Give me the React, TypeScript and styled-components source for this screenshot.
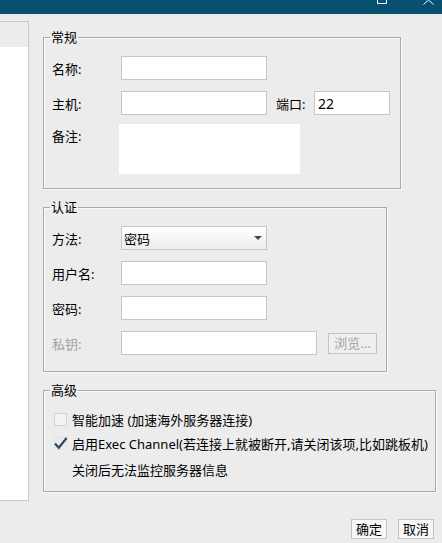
import React, { FC, ReactNode } from 'react';
import styled, { createGlobalStyle } from 'styled-components';

const GlobalStyle = createGlobalStyle`
  html, body {
    margin: 0;
    padding: 0;
    background: #ececec;
  }
  body {
    font-family: "Noto Sans", "Noto Sans CJK SC", sans-serif;
    font-size: 13px;
    color: #000;
  }
`;

const Window = styled.div`
  width: 442px;
  height: 543px;
  overflow: hidden;
  display: flex;
  flex-direction: column;
  background: #ececec;
`;

const TitleBar = styled.div`
  height: 14px;
  flex: none;
  background: #075070;
  display: flex;
  justify-content: flex-end;
  align-items: flex-start;
  gap: 36px;
  padding-right: 8px;
`;

const Body = styled.div`
  display: flex;
  flex: none;
  height: 487px;
`;

const SidePanel = styled.div`
  margin-top: 7px;
  width: 28px;
  height: 478px;
  border-top: 1px solid #c8c8c8;
  border-right: 1px solid #c8c8c8;
  border-bottom: 1px solid #c8c8c8;
  display: flex;
  flex-direction: column;
`;

const SideHeader = styled.div`
  height: 25px;
  background: #ececec;
`;

const SideList = styled.div`
  flex: 1;
  background: #fff;
`;

const Form = styled.div`
  padding: 16px 0 0 14px;
  display: flex;
  flex-direction: column;
  gap: 11px;
`;

const GroupBox = styled.fieldset<{ $w: number; $pb: number }>`
  width: ${p => p.$w}px;
  box-sizing: border-box;
  margin: 0;
  padding: 12px 8px ${p => p.$pb}px 8px;
  border: 1px solid #a9a9a9;
  box-shadow: inset 1px 1px 0 #fafafa, 1px 1px 0 #fafafa;
  min-width: 0;
`;

const Legend = styled.legend`
  padding: 0 1px;
  margin-left: -2px;
  line-height: 14px;
`;

const Rows = styled.div<{ $gap: number }>`
  display: flex;
  flex-direction: column;
  gap: ${p => p.$gap}px;
`;

const Row = styled.div`
  display: flex;
  align-items: center;
  height: 24px;
`;

const TopRow = styled.div`
  display: flex;
  align-items: flex-start;
  margin-top: 9px;
`;

const Label = styled.span<{ $w?: number; $disabled?: boolean }>`
  width: ${p => p.$w ?? 69}px;
  flex: none;
  white-space: nowrap;
  color: ${p => (p.$disabled ? '#a3a3a3' : '#000')};
`;

const Input = styled.div<{ $w?: number }>`
  width: ${p => p.$w ?? 146}px;
  height: 24px;
  box-sizing: border-box;
  flex: none;
  background: #fff;
  border: 1px solid #c6c6c6;
  padding-left: 3px;
  display: flex;
  align-items: center;
  font-size: 14px;
`;

const Memo = styled.div`
  width: 181px;
  height: 50px;
  margin-left: -2px;
  background: #fff;
`;

const MemoLabel = styled(Label)`
  padding-top: 2px;
`;

const Combo = styled.div`
  width: 146px;
  height: 24px;
  box-sizing: border-box;
  border: 1px solid #c6c6c6;
  background: linear-gradient(#ffffff, #ececec);
  display: flex;
  align-items: center;
  justify-content: space-between;
  padding: 0 4px 0 2px;
`;

const Arrow = styled.span`
  width: 0;
  height: 0;
  border-left: 4px solid transparent;
  border-right: 4px solid transparent;
  border-top: 4px solid #4a4a4a;
`;

const Spacer = styled.span<{ $w: number }>`
  width: ${p => p.$w}px;
  flex: none;
`;

const Button = styled.button<{ $disabled?: boolean; $w: number; $h: number }>`
  width: ${p => p.$w}px;
  height: ${p => p.$h}px;
  box-sizing: border-box;
  padding: 0;
  font-family: inherit;
  font-size: 13px;
  line-height: 1;
  border: 1px solid #c4c4c4;
  background: ${p => (p.$disabled ? '#efefef' : '#f7f7f7')};
  color: ${p => (p.$disabled ? '#a3a3a3' : '#000')};
`;

const CheckRow = styled.div<{ $mt?: number }>`
  display: flex;
  align-items: center;
  height: 24px;
  margin-top: ${p => p.$mt ?? 0}px;
  white-space: nowrap;
`;

const Box = styled.span<{ $checked?: boolean }>`
  width: 13px;
  height: 13px;
  box-sizing: border-box;
  margin: 0 5px 0 2px;
  flex: none;
  display: flex;
  align-items: center;
  justify-content: center;
  border: 1px solid ${p => (p.$checked ? '#e2e2e2' : '#d2d2d2')};
  background: ${p => (p.$checked ? 'transparent' : '#f3f3f3')};
`;

const Note = styled.span`
  padding-left: 20px;
`;

const Footer = styled.div`
  display: flex;
  justify-content: flex-end;
  gap: 11px;
  padding: 18px 8px 0 0;
`;

const Group: FC<{ title: string; w: number; pb: number; children: ReactNode }> = ({
  title,
  w,
  pb,
  children,
}) => (
  <GroupBox $w={w} $pb={pb}>
    <Legend>{title}</Legend>
    {children}
  </GroupBox>
);

const CheckBox: FC<{ checked?: boolean }> = ({ checked }) => (
  <Box $checked={checked}>
    {checked && (
      <svg width="14" height="13" viewBox="0 0 14 13" style={{ overflow: 'visible' }}>
        <path d="M1 6.5 L4.8 10.8 L12.6 1" fill="none" stroke="#34475b" strokeWidth="2.2" />
      </svg>
    )}
  </Box>
);

export default function App() {
  return (
    <>
      <GlobalStyle />
      <Window>
        <TitleBar>
          <svg width="10" height="4" viewBox="0 0 10 4">
            <path d="M0.5 0 V3.5 H9.5 V0" fill="none" stroke="#fff" strokeWidth="1" />
          </svg>
          <svg width="11" height="5" viewBox="0 0 11 5">
            <path d="M0.5 4.5 L5.5 0 L10.5 4.5" fill="none" stroke="#fff" strokeWidth="1" />
          </svg>
        </TitleBar>
        <Body>
          <SidePanel>
            <SideHeader />
            <SideList />
          </SidePanel>
          <Form>
            <Group title="常规" w={358} pb={14}>
              <Rows $gap={11}>
                <Row>
                  <Label>名称:</Label>
                  <Input />
                </Row>
                <Row>
                  <Label>主机:</Label>
                  <Input />
                  <Spacer $w={9} />
                  <Label $w={38}>端口:</Label>
                  <Input $w={76}>22</Input>
                </Row>
              </Rows>
              <TopRow>
                <MemoLabel>备注:</MemoLabel>
                <Memo />
              </TopRow>
            </Group>
            <Group title="认证" w={344} pb={16}>
              <Rows $gap={11}>
                <Row>
                  <Label>方法:</Label>
                  <Combo>
                    <span>密码</span>
                    <Arrow />
                  </Combo>
                </Row>
                <Row>
                  <Label>用户名:</Label>
                  <Input />
                </Row>
                <Row>
                  <Label>密码:</Label>
                  <Input />
                </Row>
                <Row>
                  <Label $disabled>私钥:</Label>
                  <Input $w={196} />
                  <Spacer $w={11} />
                  <Button $disabled $w={49} $h={21}>
                    浏览...
                  </Button>
                </Row>
              </Rows>
            </Group>
            <Group title="高级" w={393} pb={10}>
              <CheckRow $mt={-2}>
                <CheckBox />
                智能加速 (加速海外服务器连接)
              </CheckRow>
              <CheckRow>
                <CheckBox checked />
                启用Exec Channel(若连接上就被断开,请关闭该项,比如跳板机)
              </CheckRow>
              <CheckRow $mt={2}>
                <Note>关闭后无法监控服务器信息</Note>
              </CheckRow>
            </Group>
          </Form>
        </Body>
        <Footer>
          <Button $w={36} $h={20}>
            确定
          </Button>
          <Button $w={36} $h={20}>
            取消
          </Button>
        </Footer>
      </Window>
    </>
  );
}
